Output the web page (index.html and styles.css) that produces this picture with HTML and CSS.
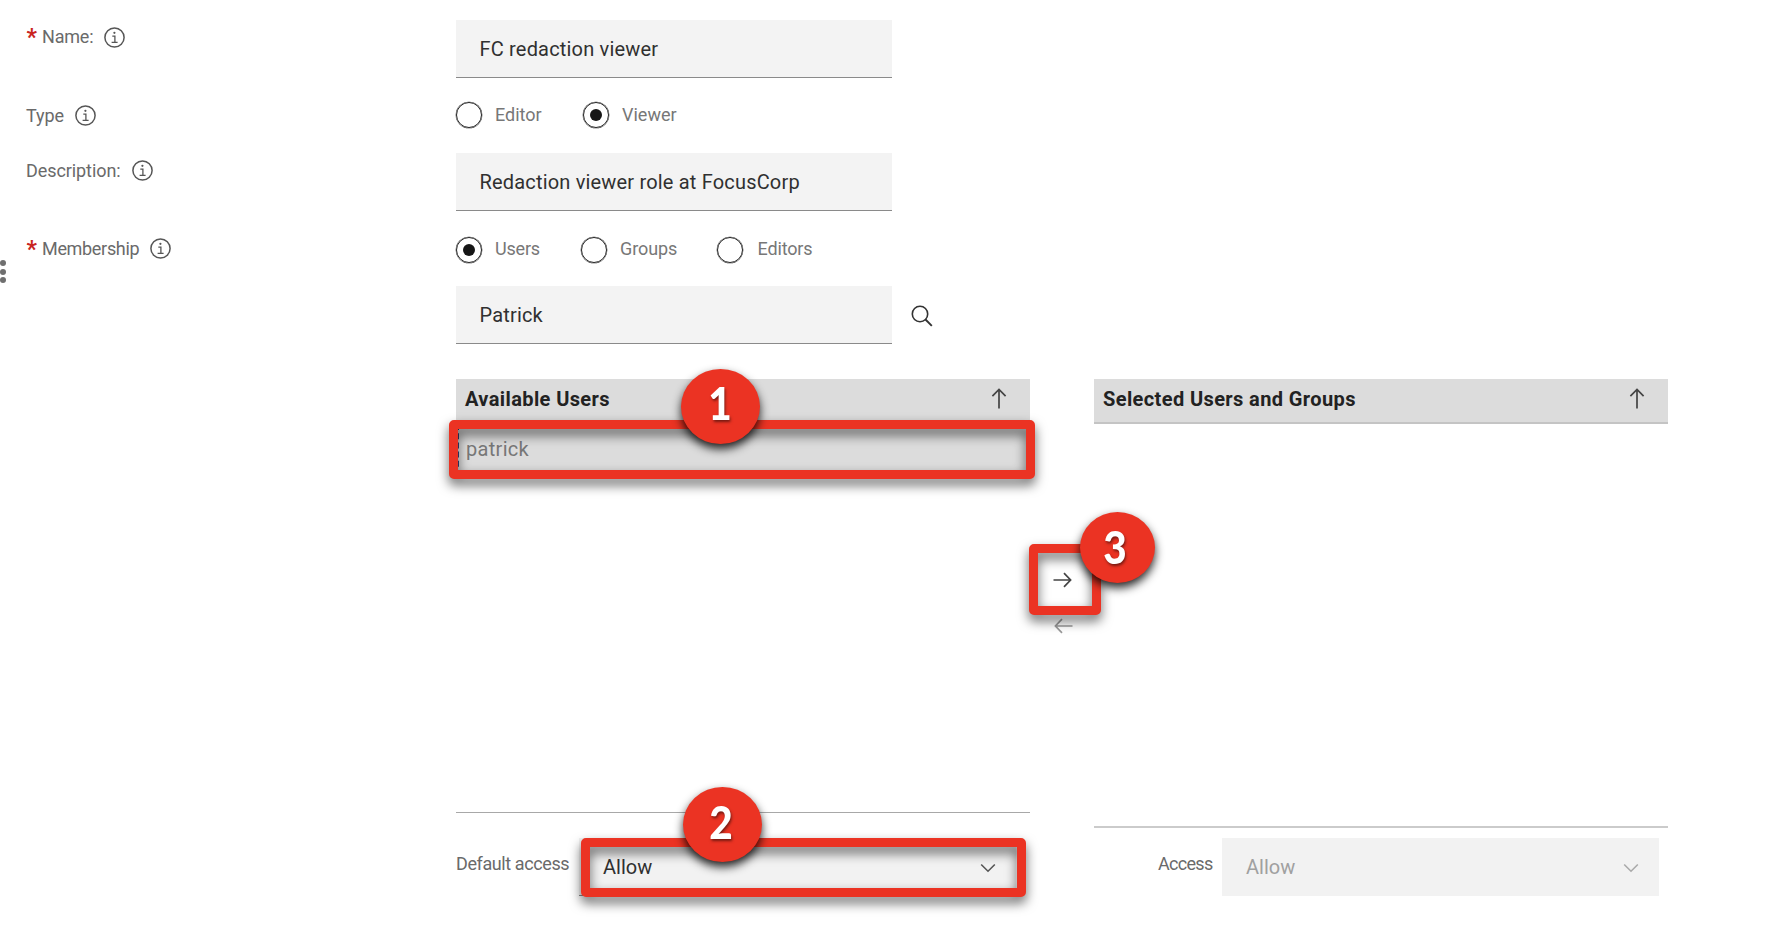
FILE: index.html
```html
<!DOCTYPE html>
<html lang="en">
<head>
<meta charset="utf-8">
<title>Redaction role</title>
<link rel="stylesheet" href="styles.css">
</head>
<body>
<svg class="defs" width="0" height="0">
  <symbol id="info" viewBox="0 0 21 21"><circle cx="10.5" cy="10.5" r="9.6" fill="none" stroke="currentColor" stroke-width="1.5"/><path d="M8.3 9.2h2.6v6M7.6 15.3h6" fill="none" stroke="currentColor" stroke-width="1.3"/><circle cx="10.4" cy="5.8" r="1.1" fill="currentColor"/></symbol>
  <symbol id="up" viewBox="0 0 16 21"><path d="M8 20.5V1.5M1.4 8.2 8 1.5l6.600 6.700" fill="none" stroke="currentColor" stroke-width="1.7"/></symbol>
  <symbol id="right" viewBox="0 0 19 16"><path d="M.5 8h17M11 1.200 17.600 8 11 14.800" fill="none" stroke="currentColor" stroke-width="1.7"/></symbol>
  <symbol id="chevron" viewBox="0 0 16 10"><path d="M1.200 1.500 8 8.200l6.800-6.700" fill="none" stroke="currentColor" stroke-width="1.6"/></symbol>
</svg>
<main class="page">
  <div class="row row-name">
    <div class="label"><span class="star">*</span><span class="t-name">Name:</span><svg class="info"><use href="#info"/></svg></div>
    <div class="input"><span class="t-input">FC redaction viewer</span></div>
  </div>
  <div class="row row-type">
    <div class="label"><span class="t-type">Type</span><svg class="info"><use href="#info"/></svg></div>
    <div class="radios">
      <span class="radio"></span><span class="opt o1">Editor</span>
      <span class="radio on"></span><span class="opt">Viewer</span>
    </div>
  </div>
  <div class="row row-desc">
    <div class="label"><span class="t-desc">Description:</span><svg class="info"><use href="#info"/></svg></div>
    <div class="input"><span class="t-input">Redaction viewer role at FocusCorp</span></div>
  </div>
  <div class="row row-member">
    <div class="label"><span class="star">*</span><span class="t-member">Membership</span><svg class="info"><use href="#info"/></svg></div>
    <div class="radios">
      <span class="radio on"></span><span class="opt o2">Users</span>
      <span class="radio"></span><span class="opt o3">Groups</span>
      <span class="radio"></span><span class="opt o4">Editors</span>
    </div>
  </div>
  <div class="row row-search">
    <div class="input"><span class="t-input">Patrick</span></div>
    <svg class="search" viewBox="0 0 22 22"><circle cx="9" cy="9" r="7.700" fill="none" stroke="currentColor" stroke-width="1.600"/><path d="m14.500 14.500 6.300 6.300" stroke="currentColor" stroke-width="1.900"/></svg>
  </div>
  <div class="picker">
    <section class="left">
      <div class="list">
        <header class="head"><span>Available Users</span><svg class="up"><use href="#up"/></svg></header>
        <div class="item"><span class="t-item">patrick</span></div>
      </div>
      <div class="access"><span class="acc-label t-default">Default access</span><div class="select"><span>Allow</span><svg class="chev"><use href="#chevron"/></svg></div></div>
    </section>
    <div class="moves"><svg class="move"><use href="#right"/></svg><svg class="move back"><use href="#right"/></svg></div>
    <section class="right">
      <div class="list">
        <header class="head ruled"><span>Selected Users and Groups</span><svg class="up"><use href="#up"/></svg></header>
      </div>
      <div class="access"><span class="acc-label t-access">Access</span><div class="select off"><span>Allow</span><svg class="chev"><use href="#chevron"/></svg></div></div>
    </section>
  </div>
  <div class="grip"><i></i><i></i><i></i></div>
  <div class="frame f1"></div><div class="frame f2"></div><div class="frame f3"></div>
  <div class="badge b1"><span class="digit">1</span></div><div class="badge b2"><span class="digit">2</span></div><div class="badge b3"><span class="digit">3</span></div>
</main>
</body>
</html>
```
FILE: styles.css
```css
* { box-sizing: border-box; }
body { margin: 0; background: #fff; color: #6a6a6a; font-family: Roboto, "Noto Sans", sans-serif; font-size: 18px; line-height: 22px; }
svg { display: block; flex: none; }
span { white-space: nowrap; }
.defs { position: absolute; }
.page { position: relative; width: 1790px; height: 936px; overflow: hidden; padding-top: 20px; }
.row { display: flex; align-items: flex-start; padding-left: 26px; }
.label { width: 430px; display: flex; align-items: center; height: 22px; }
.star { width: 16px; font-size: 23px; font-weight: 700; line-height: 22px; color: #c9251f; padding: 2px 0 0 .5px; }
.info { width: 21px; height: 21px; margin-left: 11px; color: #565656; }
.t-name { letter-spacing: -.2px; }
.t-type { letter-spacing: -.1px; }
.t-desc { letter-spacing: -.08px; }
.t-member { letter-spacing: -.32px; }
.t-input { letter-spacing: .18px; }
.t-item { letter-spacing: .3px; }
.row-name { height: 75px; }
.row-name .label { margin-top: 6px; }
.row-type { height: 58px; }
.row-type .label { margin-top: 9.500px; }
.row-desc { height: 78px; }
.row-desc .label { margin-top: 6.500px; }
.row-member { height: 55px; }
.row-member .label { margin-top: 6.500px; }
.row-search { height: 93px; padding-left: 456px; }
.input { width: 436px; height: 58px; padding: 14px 0 0 23.500px; background: #f3f3f3; border-bottom: 1.500px solid #8a8a8a; color: #303030; font-size: 20px; line-height: 30px; }
.radios { display: flex; align-items: center; height: 26px; margin-top: 7px; color: #777; }
.row-member .radios { margin-top: 6px; }
.radio { width: 26px; height: 26px; flex: none; border: 1.500px solid #222; border-radius: 50%; display: grid; place-items: center; box-shadow: 0 0 0 .3px #222; }
.radio.on::after { content: ""; width: 12px; height: 12px; border-radius: 50%; background: #161616; }
.opt { margin-left: 13px; }
.o1 { width: 88px; }
.o2 { width: 86px; letter-spacing: -.2px; }
.o3 { width: 97px; letter-spacing: -.1px; }
.o4 { margin-left: 14.500px; letter-spacing: -.15px; }
.row-member .opt { margin-top: -3px; }
.search { width: 22px; height: 22px; margin: 18.500px 0 0 19px; color: #333; }
.picker { display: flex; padding-left: 456px; }
.left, .right { width: 574px; }
.list { height: 434px; border-bottom: 1px solid #a8a8a8; }
.right .list { height: 449px; border-bottom: 2px solid #cbcbcb; }
.head { height: 45px; display: flex; justify-content: space-between; padding: 9px 23px 0 9px; background: #dcdcdc; color: #222; font-size: 20px; font-weight: 700; letter-spacing: .39px; }
.ruled { border-bottom: 2px solid #c4c4c4; }
.up { width: 16px; height: 21px; color: #444; }
.item { height: 52px; background: #dcdcdc; padding: 14px 0 0 7px; font-size: 20px; color: #777; border-left: 3px dashed #33437a; }
.access { display: flex; height: 58px; margin-top: 25px; }
.right .access { margin-top: 10px; }
.acc-label { padding-top: 15px; width: 123px; }
.t-default { letter-spacing: -.4px; }
.right .acc-label { width: 128px; padding-left: 64px; letter-spacing: -.7px; }
.select { width: 437px; height: 58px; background: #f2f2f2; border-bottom: 1.500px solid #8a8a8a; color: #303030; font-size: 20px; display: flex; justify-content: space-between; padding: 18px 20px 0 24px; }
.select.off { border: 0; color: #a0a0a0; }
.chev { width: 16px; height: 10px; margin-top: 7px; color: #555; }
.off .chev { color: #aaa; }
.moves { width: 64px; padding: 193px 0 0 23px; }
.move { width: 19px; height: 16px; color: #444; }
.back { margin: 30px 0 0 1px; color: #999; transform: scaleX(-1); }
.grip { position: absolute; left: 0; top: 260px; }
.grip i { display: block; width: 6px; height: 6px; margin-bottom: 2.700px; border-radius: 50%; background: #6f6f6f; }
.frame { position: absolute; border: 9px solid #eb3323; border-radius: 5px; filter: drop-shadow(0 6px 6px rgba(0,0,0,.6)); }
.f1 { left: 449px; top: 420px; width: 586px; height: 59px; }
.f2 { left: 581px; top: 838px; width: 445px; height: 59px; }
.f3 { left: 1029px; top: 544px; width: 72px; height: 71px; }
.badge { position: absolute; width: 79px; height: 75px; border-radius: 50%; background: #eb3323; color: #fff; font: 900 45px/68px Lato, sans-serif; text-align: center; text-shadow: 1px 2px 3px rgba(0,0,0,.5); box-shadow: 0 5px 10px rgba(0,0,0,.85); }
.digit { display: inline-block; transform: scaleX(.9); }
.b1 { left: 681px; top: 369px; padding-right: 1px; }
.b2 { left: 683px; top: 787px; padding-right: 2px; line-height: 71px; }
.b3 { left: 1080px; top: 512px; width: 75px; height: 71px; line-height: 70px; padding-right: 4px; }
```
